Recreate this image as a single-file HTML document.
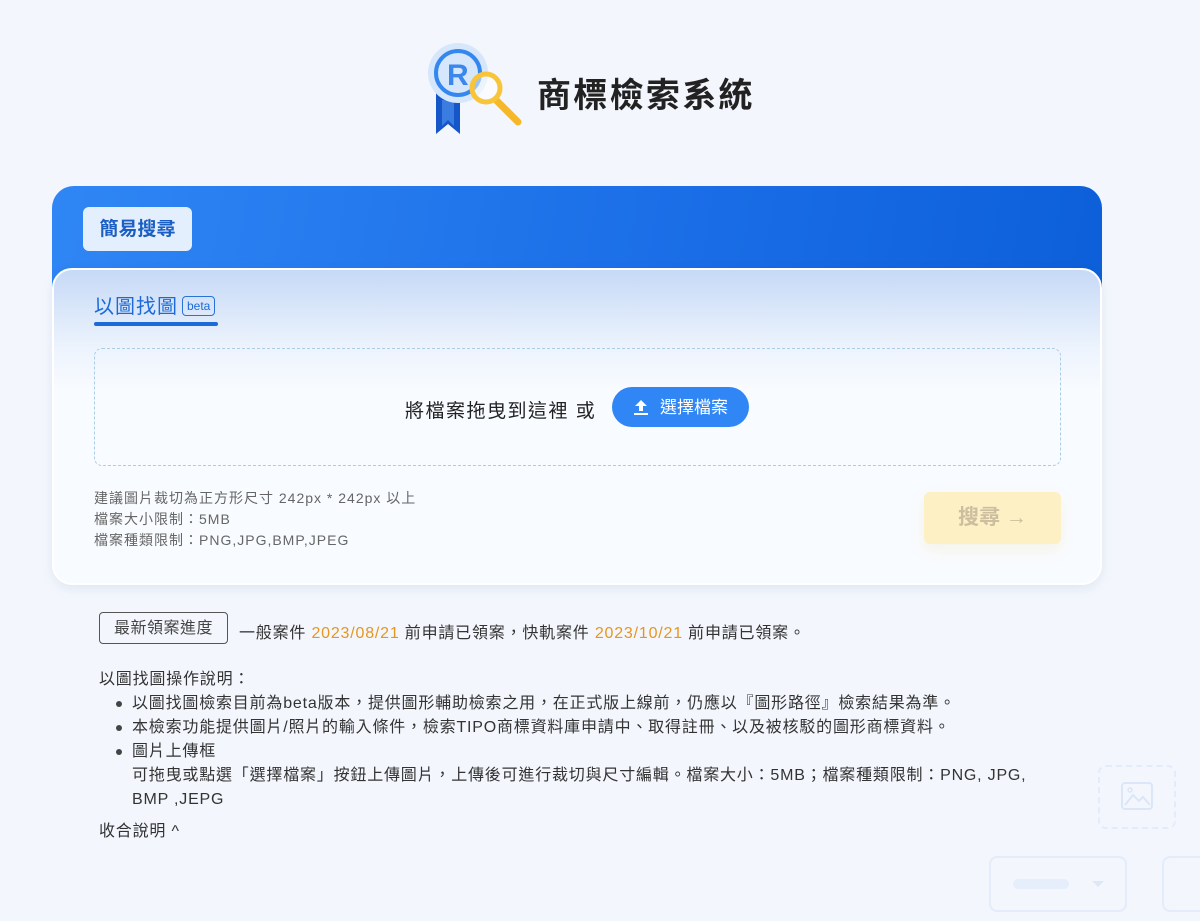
<!DOCTYPE html>
<html><head><meta charset="utf-8"><style>
*{margin:0;padding:0;box-sizing:border-box}
body{width:1200px;height:921px;background:#f3f7fd;font-family:"Liberation Sans","Noto Sans CJK TC",sans-serif;color:#333;position:relative;overflow:hidden}
.abs{position:absolute}
.title{left:537px;top:68px;font-size:34px;font-weight:bold;color:#222;letter-spacing:2.3px}
.blue{left:52px;top:186px;width:1050px;height:200px;border-radius:22px 22px 0 0;background:linear-gradient(100deg,#2f86f4,#1a6de6 60%,#0c5fd9)}
.simple{left:83px;top:207px;width:109px;height:44px;border-radius:6px;background:#e4effd;color:#1c5fc4;font-size:19px;text-align:center;line-height:46px;font-weight:bold}
.panel{left:52px;top:268px;width:1050px;height:317px;border-radius:20px;background:linear-gradient(180deg,#c6d9f6 0,#eef4fd 80px,#f8fbff 120px);border:2px solid #fff;box-shadow:0 4px 12px rgba(0,40,120,.08)}
.tab{left:94px;top:290px;font-size:20px;color:#1b6ad9;letter-spacing:1px}
.beta{display:inline-block;font-size:12px;border:1px solid #2b72d8;border-radius:4px;padding:0 4px;line-height:18px;vertical-align:3px;margin-left:4px;letter-spacing:0}
.uline{left:94px;top:322px;width:124px;height:4px;border-radius:2px;background:#1b6ad9}
.drop{left:94px;top:348px;width:967px;height:118px;border:1px dashed #a9cde8;border-radius:8px}
.droptxt{left:405px;top:396px;font-size:19px;color:#222;letter-spacing:1.5px}
.btn{left:612px;top:387px;width:137px;height:40px;border-radius:20px;background:#2f86f4;color:#fff;font-size:17px;line-height:42px;padding-left:48px}
.hint{left:94px;top:488px;font-size:14px;color:#666;line-height:21px;letter-spacing:1px}
.search{left:924px;top:492px;width:137px;height:52px;border-radius:6px;background:#fdf0c5;color:#cbbfa0;font-size:21px;font-weight:bold;text-align:center;line-height:52px;box-shadow:0 6px 14px rgba(240,200,100,.15)}
.prog{left:99px;top:612px;width:129px;height:32px;border:1px solid #555;border-radius:4px;font-size:16px;text-align:center;line-height:32px;color:#444;letter-spacing:0.5px}
.progt{left:239px;top:619px;font-size:16px;color:#333;letter-spacing:0.8px}
.org{color:#e6961e}
.desc{left:99px;top:668px;font-size:16px;line-height:24px;color:#333;letter-spacing:0.8px}
.desc ul{margin-left:33px}
.desc li{list-style:none;position:relative}
.desc li::before{content:"";position:absolute;left:-16px;top:9px;width:6px;height:6px;border-radius:50%;background:#444}
.deco{border:2px solid #e3ecfb;border-radius:8px}
</style></head><body>
<svg class="abs" style="left:420px;top:40px" width="110" height="96" viewBox="0 0 110 96">
<path d="M16 50 L16 94 L28 84 L40 94 L40 50Z" fill="#1557c9"/>
<path d="M22 60 L22 86 L28 80 L34 86 L34 60Z" fill="#3a7ce0"/>
<circle cx="38" cy="33" r="30" fill="#d6e6fb"/>
<circle cx="38" cy="33" r="22" fill="none" stroke="#3487ee" stroke-width="4"/>
<text x="27" y="45" font-family="Liberation Sans" font-weight="bold" font-size="30" fill="#3a87ee">R</text>
<line x1="76" y1="60" x2="98" y2="82" stroke="#f5b82a" stroke-width="7" stroke-linecap="round"/>
<circle cx="66" cy="48" r="14" fill="rgba(255,255,255,.5)" stroke="#f8c53a" stroke-width="5"/>
</svg>
<div class="abs title">商標檢索系統</div>
<div class="abs blue"></div>
<div class="abs simple">簡易搜尋</div>
<div class="abs panel"></div>
<div class="abs tab">以圖找圖<span class="beta">beta</span></div>
<div class="abs uline"></div>
<div class="abs drop"></div>
<div class="abs droptxt">將檔案拖曳到這裡 或</div>
<div class="abs btn">選擇檔案</div>
<svg class="abs" style="left:632px;top:398px" width="18" height="18" viewBox="0 0 18 18"><path d="M9 2 L3 8 H7 V13 H11 V8 H15Z M2 15 H16 V17 H2Z" fill="#fff"/></svg>
<div class="abs hint">建議圖片裁切為正方形尺寸 242px * 242px 以上<br>檔案大小限制：5MB<br>檔案種類限制：PNG,JPG,BMP,JPEG</div>
<div class="abs search">搜尋 →</div>
<div class="abs prog">最新領案進度</div>
<div class="abs progt">一般案件 <span class="org">2023/08/21</span> 前申請已領案，快軌案件 <span class="org">2023/10/21</span> 前申請已領案。</div>
<div class="abs desc">以圖找圖操作說明：
<ul><li>以圖找圖檢索目前為beta版本，提供圖形輔助檢索之用，在正式版上線前，仍應以『圖形路徑』檢索結果為準。</li>
<li>本檢索功能提供圖片/照片的輸入條件，檢索TIPO商標資料庫申請中、取得註冊、以及被核駁的圖形商標資料。</li>
<li>圖片上傳框<br>可拖曳或點選「選擇檔案」按鈕上傳圖片，上傳後可進行裁切與尺寸編輯。檔案大小：5MB；檔案種類限制：PNG, JPG,<br>BMP ,JEPG</li></ul>
<div style="margin-top:8px">收合說明 ^</div></div>
<div class="abs deco" style="left:1098px;top:765px;width:78px;height:64px;border-style:dashed"></div>
<svg class="abs" style="left:1120px;top:781px" width="34" height="30"><rect x="2" y="2" width="30" height="26" rx="3" fill="none" stroke="#dbe6f8" stroke-width="2"/><path d="M5 24 L13 14 L19 20 L23 16 L30 24" fill="none" stroke="#dbe6f8" stroke-width="2"/><circle cx="10" cy="9" r="2" fill="none" stroke="#dbe6f8" stroke-width="1.5"/></svg>
<div class="abs deco" style="left:989px;top:856px;width:138px;height:56px"></div>
<div class="abs" style="left:1013px;top:879px;width:56px;height:10px;border-radius:5px;background:#e6eefb"></div>
<div class="abs" style="left:1092px;top:881px;width:0;height:0;border-left:6px solid transparent;border-right:6px solid transparent;border-top:6px solid #dce7f8"></div>
<div class="abs deco" style="left:1162px;top:856px;width:60px;height:56px"></div>
</body></html>
